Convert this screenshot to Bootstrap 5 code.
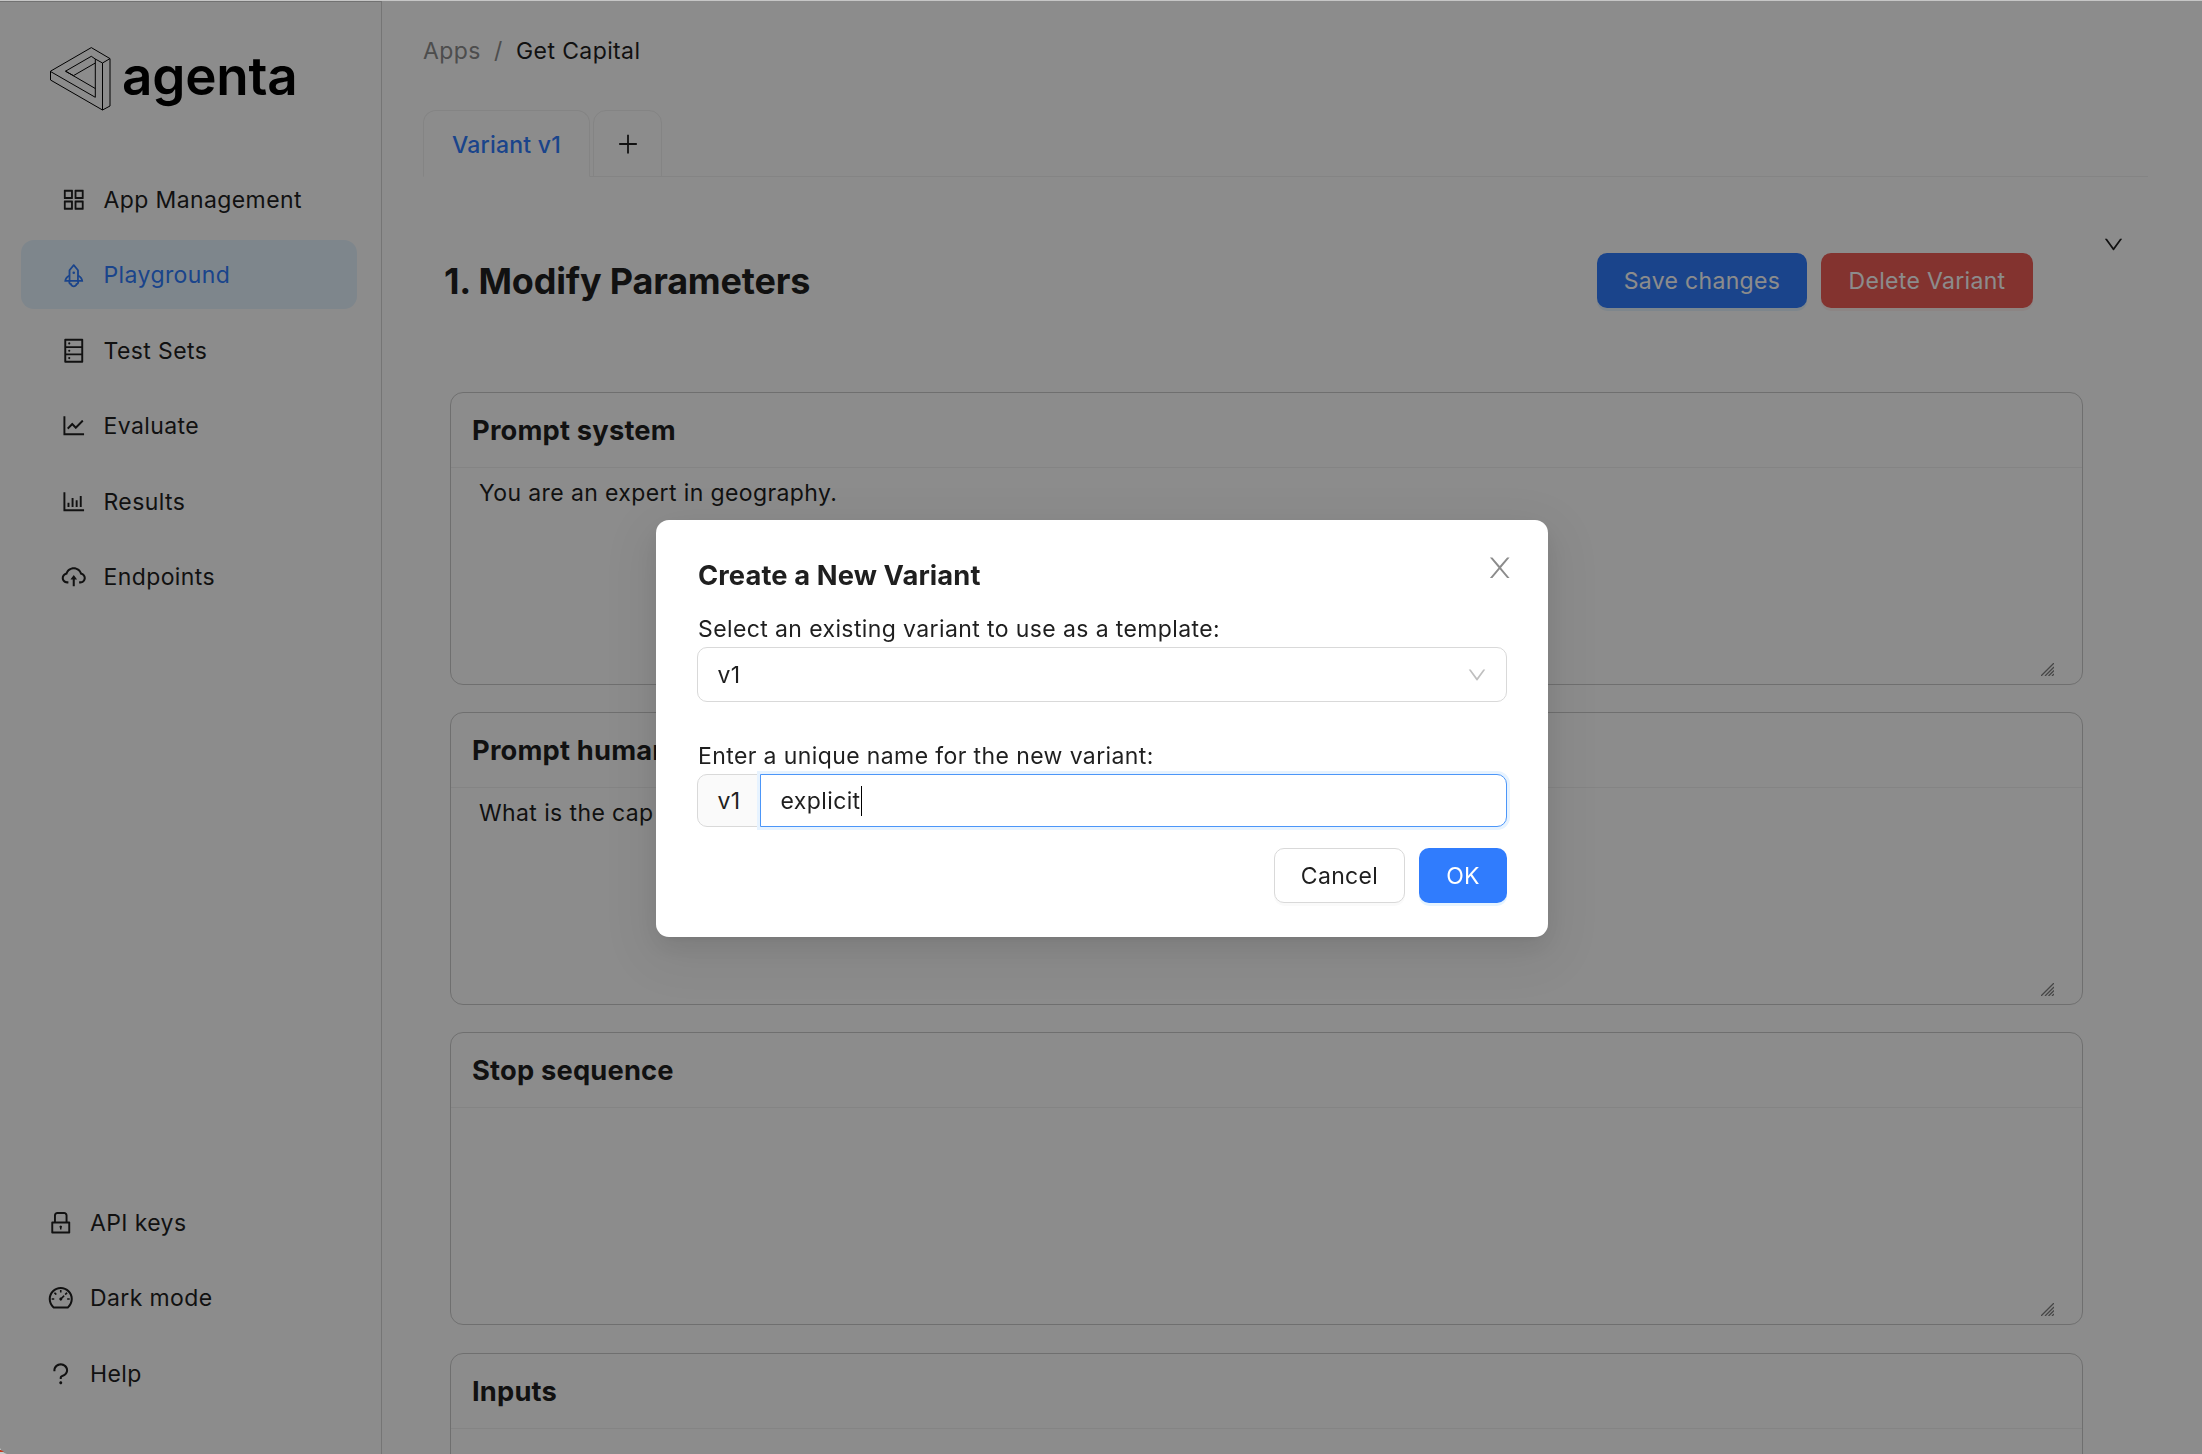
<!DOCTYPE html>
<html lang="en">
<head>
<meta charset="utf-8">
<title>Agenta - Playground</title>
<meta name="viewport" content="width=device-width, initial-scale=1">
<link href="https://cdn.jsdelivr.net/npm/bootstrap@5.3.0/dist/css/bootstrap.min.css" rel="stylesheet">
<style>
:root { --ink: #1f1f1f; --brand: #307cfd; --line: #f0f0f0; --field: #d9d9d9; }
html, body { height: 100%; overflow: hidden; }
body { font-family: Inter, "Liberation Sans", sans-serif; font-size: 23px; font-weight: 425; line-height: 36px; letter-spacing: .017em; color: var(--ink); background: #fff; }
.ico { width: 27.5px; height: 27.5px; fill: currentColor; flex: none; display: block; }
.app-shell { height: 1454px; overflow: hidden; padding-top: 1px; }

.side-col { width: 382px; border-top: 1px solid #d0d0d0; border-right: 1px solid #d6d6d6; padding: 44px 24px 46px 21px; }
.brand-row { padding-left: 27px; height: 66px; }
.brand-mark { width: 64px; height: 66px; fill: none; stroke: #000; stroke-width: 1; stroke-linejoin: round; }
.brand-name { font-weight: 560; font-size: 53px; line-height: 60px; height: 66px; letter-spacing: -.004em; color: #000; margin-left: 10px; }
.side-nav { gap: 6.4px; }
.side-nav .nav-link { height: 69px; padding: 1px 39px 0; gap: 16px; border-radius: 13px; color: var(--ink); display: flex; align-items: center; white-space: nowrap; }
.side-nav.top-nav { margin-top: 53px; }
.side-nav .nav-link.active { background: #e6f4ff; color: var(--brand); }
.side-nav.low-nav .nav-link { padding: 0 25.5px; }

.main-col { padding: 32px 54px 0 41px; }
.crumbs { height: 36px; margin-bottom: 41px; --bs-breadcrumb-divider-color: #8c8c8c; --bs-breadcrumb-item-padding-x: 13.3px; }
.crumbs .breadcrumb-item { color: #8c8c8c; }
.crumbs .breadcrumb-item.active { color: var(--ink); }
.tab-strip { border-bottom: 1px solid var(--line); height: 67px; gap: 3px; flex-wrap: nowrap; }
.tab-strip .nav-link { height: 67px; border: 1px solid var(--line); border-radius: 13px 13px 0 0; padding: 2px 0 0; display: flex; align-items: center; justify-content: center; color: var(--ink); margin: 0; }
.tab-strip .nav-link.active { width: 167px; border-color: var(--line); border-bottom-color: #fff; color: var(--brand); font-weight: 500; letter-spacing: .01em; }
.tab-strip .tab-add { width: 69px; padding: 0; }
.tab-add .ico { width: 24px; height: 24px; }

.param-head { padding: 76px 23px 0 21px; height: 215px; align-items: flex-start; }
.param-head h2 { font-size: 36px; line-height: 56px; font-weight: 700; letter-spacing: -.005em; margin: 0; }
.btn { height: 55px; border-radius: 10px; font-size: 23px; font-weight: 425; line-height: 1; padding: 1px 0 0; letter-spacing: .014em; white-space: nowrap; }
.btn-brand, .btn-brand:hover { background: var(--brand); color: #fff; border: 0; box-shadow: 0 3px 0 rgba(5,145,255,.1); }
.btn-drop { background: #ee5d57; color: #fff; border: 0; box-shadow: 0 3px 0 rgba(255,38,5,.06); }
.btn-plain { background: #fff; color: var(--ink); border: 1px solid var(--field); box-shadow: 0 3px 0 rgba(0,0,0,.02); }
.head-actions { gap: 14px; margin-right: 69px; }
.w-save { width: 210px; } .w-drop { width: 212px; } .w-cancel { width: 131px; } .w-ok { width: 88px; }
.fold { width: 23px; height: 23px; margin-top: -20px; }

.param-list { padding: 0 65px 0 27px; gap: 27.2px; }
.param-card { height: 293px; flex: none; border: 1px solid #cbcbcb; border-radius: 13px; --bs-card-bg: #fff; color: var(--ink); }
.param-card .card-header { height: 75px; background: none; border-bottom: 1px solid var(--line); padding: 2px 21px 0; font-size: 27.3px; font-weight: 650; display: flex; align-items: center; letter-spacing: .007em; }
.param-card .card-body { padding: 7px 28px 8px 28px; display: flex; justify-content: space-between; }
.grip { width: 13px; height: 13px; align-self: flex-end; stroke: #808080; stroke-width: 1.3; fill: none; }

.shade { position: fixed; inset: 0; background: rgba(0,0,0,.45); z-index: 1040; }
.top-edge { position: fixed; top: 0; left: 0; right: 0; height: 1px; background: #c6c6c6; z-index: 1045; }
.low-corner { position: fixed; left: 0; bottom: 0; width: 7px; height: 6px; z-index: 1045; }
.variant-modal .modal-dialog { max-width: 892px; margin: 520px 0 0 656px; }
.variant-modal .modal-content { height: 417px; border: 0; border-radius: 13px; padding: 35px 41px 34px; color: var(--ink); box-shadow: 0 10px 28px rgba(0,0,0,.08), 0 5px 10px -7px rgba(0,0,0,.12), 0 15px 48px 14px rgba(0,0,0,.05); }
.variant-modal .modal-title { font-size: 27.3px; line-height: 42px; font-weight: 650; letter-spacing: .004em; margin-left: 1px; }
.dismiss { position: absolute; top: 34px; right: 35px; color: #8c8c8c; }
.field-label { height: 36px; margin: 14px 0 0 1px; white-space: nowrap; }
.pick + .field-label { margin-top: 36px; }
.pick { height: 55px; border: 1px solid var(--field); border-radius: 10px; padding: 0 18px 0 19.5px; }
.pick .ico { width: 22px; height: 22px; color: #bfbfbf; }
.name-group { height: 53px; }
.name-group .input-group-text { width: 64px; padding: 1px 0 0 19.5px; background: #fafafa; border: 1px solid var(--field); border-radius: 10px 0 0 10px; font-size: 23px; font-weight: 425; letter-spacing: .017em; color: var(--ink); }
.name-box { border: 1px solid #4c96f8; border-radius: 0 10px 10px 0; padding: 0 20px 0 19.5px; box-shadow: 0 0 0 3px #e7f3ff; background: #fff; margin-left: -1px; display: flex; align-items: center; color: var(--ink); z-index: 2; }
.caret { width: 1px; height: 30px; background: #000; }
.modal-actions { gap: 14px; margin-top: 21px; }
</style>
<script src="https://cdn.jsdelivr.net/npm/bootstrap@5.3.0/dist/js/bootstrap.bundle.min.js"></script>
</head>
<body>
<svg class="d-none">
  <symbol id="i-apps" viewBox="0 0 1024 1024"><path d="M464 144H160c-8.800 0-16 7.200-16 16v304c0 8.800 7.200 16 16 16h304c8.800 0 16-7.200 16-16V160c0-8.800-7.200-16-16-16zm-52 268H212V212h200v200zm452-268H560c-8.800 0-16 7.200-16 16v304c0 8.800 7.200 16 16 16h304c8.800 0 16-7.200 16-16V160c0-8.800-7.200-16-16-16zm-52 268H612V212h200v200zM464 544H160c-8.800 0-16 7.200-16 16v304c0 8.800 7.200 16 16 16h304c8.800 0 16-7.200 16-16V560c0-8.800-7.200-16-16-16zm-52 268H212V612h200v200zm452-268H560c-8.800 0-16 7.200-16 16v304c0 8.800 7.200 16 16 16h304c8.800 0 16-7.200 16-16V560c0-8.800-7.200-16-16-16zm-52 268H612V612h200v200z"/></symbol>
  <symbol id="i-rocket" viewBox="0 0 1024 1024"><path d="M864 736c0-111.600-65.400-208-160-252.900V317.300c0-15.100-5.300-29.700-15.100-41.200L536.500 95.400C530.100 87.800 521 84 512 84s-18.100 3.800-24.500 11.400L335.100 276.100a63.970 63.970 0 00-15.100 41.200v165.800C225.400 528 160 624.400 160 736h156.500c-2.300 7.200-3.500 15-3.500 23.800 0 22.100 7.600 43.700 21.400 60.800a97.200 97.200 0 0043.100 30.600c23.100 54 75.600 88.800 134.500 88.800 29.100 0 57.300-8.600 81.400-24.800 23.600-15.800 41.900-37.900 53-64a97 97 0 0043.100-30.500 97.520 97.520 0 0021.400-60.800c0-8.400-1.100-16.400-3.100-23.800H864zM762.300 621.400c9.400 14.600 17 30.300 22.500 46.600H700V558.700a211.600 211.600 0 0162.300 62.700zM388 483.100V318.800l124-147 124 147V668H388V483.100zM239.200 668c5.500-16.300 13.100-32 22.500-46.600 16.300-25.200 37.500-46.500 62.300-62.700V668h-84.800zm388.900 116.200c-5.200 3-11.200 4.200-17.100 3.400l-19.500-2.400-2.800 19.400c-5.400 37.900-38.400 66.500-76.700 66.500-38.300 0-71.300-28.600-76.700-66.500l-2.800-19.500-19.500 2.500a27.700 27.700 0 01-17.100-3.500c-8.700-5-14.100-14.300-14.100-24.400 0-10.600 5.900-19.400 14.600-23.800h231.300c8.800 4.500 14.600 13.300 14.600 23.800-.1 10.200-5.500 19.600-14.200 24.500zM464 400a48 48 0 1096 0 48 48 0 10-96 0z"/></symbol>
  <symbol id="i-sets" viewBox="0 0 1024 1024"><path d="M832 64H192c-17.700 0-32 14.300-32 32v832c0 17.700 14.300 32 32 32h640c17.700 0 32-14.300 32-32V96c0-17.700-14.300-32-32-32zm-600 72h560v208H232V136zm560 480H232V408h560v208zm0 272H232V680h560v208zM304 240a40 40 0 1080 0 40 40 0 10-80 0zm0 272a40 40 0 1080 0 40 40 0 10-80 0zm0 272a40 40 0 1080 0 40 40 0 10-80 0z"/></symbol>
  <symbol id="i-line" viewBox="0 0 1024 1024"><path d="M888 792H200V168c0-4.400-3.600-8-8-8h-56c-4.400 0-8 3.600-8 8v688c0 4.400 3.600 8 8 8h752c4.400 0 8-3.600 8-8v-56c0-4.400-3.600-8-8-8zM305.800 637.700c3.100 3.100 8.100 3.100 11.300 0l138.300-137.600L583 628.500c3.100 3.100 8.200 3.100 11.300 0l275.400-275.300c3.100-3.100 3.100-8.200 0-11.300l-39.600-39.600c-3.100-3.100-8.200-3.100-11.300 0l-230 229.900L461.400 404c-3.100-3.100-8.200-3.100-11.300 0L266.300 586.700c-3.100 3.100-3.100 8.200 0 11.300l39.500 39.700z"/></symbol>
  <symbol id="i-bars" viewBox="0 0 1024 1024"><path d="M888 792H200V168c0-4.400-3.600-8-8-8h-56c-4.400 0-8 3.600-8 8v688c0 4.400 3.600 8 8 8h752c4.400 0 8-3.600 8-8v-56c0-4.400-3.600-8-8-8zm-600-80h56c4.400 0 8-3.600 8-8V560c0-4.400-3.600-8-8-8h-56c-4.400 0-8 3.600-8 8v144c0 4.400 3.600 8 8 8zm152 0h56c4.400 0 8-3.600 8-8V384c0-4.400-3.600-8-8-8h-56c-4.400 0-8 3.600-8 8v320c0 4.400 3.600 8 8 8zm152 0h56c4.400 0 8-3.600 8-8V462c0-4.400-3.600-8-8-8h-56c-4.400 0-8 3.600-8 8v242c0 4.400 3.600 8 8 8zm152 0h56c4.400 0 8-3.600 8-8V304c0-4.400-3.600-8-8-8h-56c-4.400 0-8 3.600-8 8v400c0 4.400 3.600 8 8 8z"/></symbol>
  <symbol id="i-cloud" viewBox="0 0 1024 1024"><path d="M518.300 459a8 8 0 00-12.600 0l-112 141.700a7.980 7.980 0 006.300 12.900h73.900V856c0 4.400 3.600 8 8 8h60c4.400 0 8-3.600 8-8V613.700H624c6.700 0 10.400-7.700 6.300-12.900L518.300 459z"/><path d="M811.400 366.700C765.600 245.900 648.900 160 512.200 160S258.800 245.800 213 366.600C127.300 389.100 64 467.200 64 560c0 110.500 89.500 200 199.900 200H304c4.400 0 8-3.600 8-8v-60c0-4.400-3.600-8-8-8h-40.100c-33.700 0-65.400-13.400-89-37.700-23.500-24.200-36-56.800-34.900-90.600.9-26.400 9.900-51.200 26.200-72.100 16.700-21.300 40.100-36.800 66.100-43.700l37.900-9.900 13.900-36.600c8.600-22.800 20.600-44.100 35.700-63.400a245.600 245.600 0 0152.400-49.900c41.100-28.900 89.500-44.200 140-44.200s98.900 15.300 140 44.200c19.900 14 37.500 30.800 52.400 49.900 15.100 19.300 27.100 40.700 35.700 63.400l13.800 36.500 37.800 10C846.100 454.500 884 503.800 884 560c0 33.100-12.900 64.300-36.300 87.700a123.070 123.070 0 01-87.600 36.300H720c-4.400 0-8 3.600-8 8v60c0 4.400 3.600 8 8 8h40.100C870.500 760 960 670.500 960 560c0-92.700-63.100-170.700-148.600-193.300z"/></symbol>
  <symbol id="i-lock" viewBox="0 0 1024 1024"><path d="M832 464h-68V240c0-70.700-57.300-128-128-128H388c-70.700 0-128 57.300-128 128v224h-68c-17.700 0-32 14.300-32 32v384c0 17.700 14.300 32 32 32h640c17.700 0 32-14.300 32-32V496c0-17.700-14.300-32-32-32zM332 240c0-30.900 25.100-56 56-56h248c30.900 0 56 25.100 56 56v224H332V240zm460 600H232V536h560v304zM484 701v53c0 4.400 3.600 8 8 8h40c4.400 0 8-3.600 8-8v-53a48.010 48.010 0 10-56 0z"/></symbol>
  <symbol id="i-dash" viewBox="0 0 1024 1024"><path d="M924.800 385.600a446.700 446.700 0 00-96-142.400 446.700 446.700 0 00-142.400-96C631.100 123.800 572.500 112 512 112s-119.100 11.800-174.400 35.200a446.700 446.700 0 00-142.400 96 446.700 446.700 0 00-96 142.400C75.800 440.900 64 499.500 64 560c0 132.700 58.300 257.700 159.900 343.100l1.700 1.400c5.800 4.800 13.100 7.500 20.600 7.500h531.700c7.500 0 14.800-2.700 20.600-7.500l1.700-1.400C901.700 817.700 960 692.700 960 560c0-60.500-11.900-119.100-35.200-174.400zM761.400 836H262.600A371.120 371.120 0 01140 560c0-99.400 38.700-192.800 109-263 70.300-70.300 163.700-109 263-109 99.400 0 192.800 38.700 263 109 70.300 70.300 109 163.700 109 263 0 105.600-44.500 205.500-122.600 276zM623.500 421.500a8.030 8.030 0 00-11.300 0L527.700 506c-18.700-5-39.400-.2-54.100 14.500a55.950 55.950 0 000 79.200 55.950 55.950 0 0079.200 0 55.870 55.870 0 0014.500-54.100l84.500-84.500c3.100-3.100 3.100-8.200 0-11.300l-28.300-28.300zM490 320h44c4.400 0 8-3.600 8-8v-80c0-4.400-3.600-8-8-8h-44c-4.400 0-8 3.600-8 8v80c0 4.400 3.600 8 8 8zm260 218v44c0 4.400 3.600 8 8 8h80c4.400 0 8-3.600 8-8v-44c0-4.400-3.600-8-8-8h-80c-4.400 0-8 3.600-8 8zm12.700-197.200l-31.100-31.100a8.030 8.030 0 00-11.300 0l-56.600 56.600a8.030 8.030 0 000 11.300l31.100 31.100c3.100 3.100 8.200 3.100 11.300 0l56.600-56.600c3.100-3.100 3.100-8.200 0-11.300zm-458.600-31.100a8.030 8.030 0 00-11.300 0l-31.100 31.100a8.030 8.030 0 000 11.300l56.600 56.600c3.100 3.100 8.200 3.100 11.300 0l31.100-31.100c3.100-3.100 3.100-8.200 0-11.300l-56.600-56.600zM262 530h-80c-4.400 0-8 3.600-8 8v44c0 4.400 3.600 8 8 8h80c4.400 0 8-3.600 8-8v-44c0-4.400-3.600-8-8-8z"/></symbol>
  <symbol id="i-help" viewBox="0 0 1024 1024"><path d="M764 280.900c-14-30.600-33.900-58.100-59.300-81.600C653.100 151.400 584.600 125 512 125s-141.100 26.400-192.700 74.200c-25.400 23.600-45.300 51-59.300 81.700-14.600 32-22 65.900-22 100.900v27c0 6.200 5 11.200 11.200 11.200h54c6.200 0 11.200-5 11.200-11.200v-27c0-99.500 88.600-180.400 197.600-180.400s197.600 80.900 197.600 180.400c0 40.800-14.500 79.200-42 111.200-27.200 31.700-65.600 54.400-108.100 64-24.300 5.500-46.200 19.200-61.700 38.800a110.850 110.850 0 00-23.900 68.600v31.400c0 6.200 5 11.200 11.200 11.200h54c6.200 0 11.200-5 11.200-11.200v-31.400c0-15.700 10.900-29.500 26-32.900 58.400-13.200 111.400-44.700 149.300-88.700 19.100-22.300 34-47.100 44.300-74 10.700-27.900 16.100-57.200 16.100-87 0-35-7.400-69-22-100.900zM512 787c-30.900 0-56 25.100-56 56s25.100 56 56 56 56-25.100 56-56-25.100-56-56-56z"/></symbol>
  <symbol id="i-down" viewBox="0 0 1024 1024"><path d="M884 256h-75c-5.100 0-9.900 2.500-12.900 6.600L512 654.200 227.900 262.600c-3-4.100-7.800-6.600-12.900-6.600h-75c-6.500 0-10.300 7.400-6.500 12.700l352.600 486.100c12.800 17.600 39 17.600 51.700 0l352.600-486.100c3.900-5.300.1-12.700-6.400-12.700z"/></symbol>
  <symbol id="i-plus" viewBox="0 0 1024 1024"><path d="M474 112h76v800h-76zM136 474h752v76H136z"/></symbol>
  <symbol id="i-close" viewBox="0 0 1024 1024"><path d="M146 128h92L512 450 786 128h92L559 508 878 896h-92L512 568 238 896h-92L465 508z"/></symbol>
</svg>

<div class="app-shell d-flex">
  <aside class="side-col d-flex flex-column flex-shrink-0">
    <div class="brand-row d-flex align-items-center">
      <svg class="brand-mark" viewBox="48 46 64 66"><path d="M50.500 71.200 91.300 47.600 110 58.600V106L102.500 110 50.500 80zM110 58.600 102.500 63V110M102.500 63 91.300 56.300 65.500 71.200 95.300 88.500M50.500 71.500 95.300 97.300V59M73.500 75.600 95.300 63" class="d-none"/><path d="M50.500 71.200 91.300 47.600 110 58.600V106L102.500 110 50.500 80zM110 58.600 102.500 63V110M102.500 63 95.300 59 91.300 56.300 65.500 71.200 95.300 88.500M65.500 71.200M50.500 71.200M65.500 71.200 73.500 75.600 95.300 63M50.500 71.500 95.300 97.300V59"/></svg>
      <span class="brand-name">agenta</span>
    </div>
    <nav class="side-nav top-nav nav flex-column">
      <a class="nav-link"><svg class="ico"><use href="#i-apps"/></svg>App Management</a>
      <a class="nav-link active"><svg class="ico"><use href="#i-rocket"/></svg>Playground</a>
      <a class="nav-link"><svg class="ico"><use href="#i-sets"/></svg>Test Sets</a>
      <a class="nav-link"><svg class="ico"><use href="#i-line"/></svg>Evaluate</a>
      <a class="nav-link"><svg class="ico"><use href="#i-bars"/></svg>Results</a>
      <a class="nav-link"><svg class="ico"><use href="#i-cloud"/></svg>Endpoints</a>
    </nav>
    <nav class="side-nav low-nav nav flex-column mt-auto">
      <a class="nav-link"><svg class="ico"><use href="#i-lock"/></svg>API keys</a>
      <a class="nav-link"><svg class="ico"><use href="#i-dash"/></svg>Dark mode</a>
      <a class="nav-link"><svg class="ico"><use href="#i-help"/></svg>Help</a>
    </nav>
  </aside>

  <main class="main-col flex-grow-1 d-flex flex-column">
    <ol class="crumbs breadcrumb flex-shrink-0">
      <li class="breadcrumb-item">Apps</li>
      <li class="breadcrumb-item active">Get Capital</li>
    </ol>
    <ul class="tab-strip nav nav-tabs flex-shrink-0">
      <li class="nav-item"><a class="nav-link active">Variant v1</a></li>
      <li class="nav-item"><a class="nav-link tab-add"><svg class="ico"><use href="#i-plus"/></svg></a></li>
    </ul>
    <div class="param-head d-flex flex-shrink-0">
      <h2 class="me-auto">1. Modify Parameters</h2>
      <div class="head-actions d-flex">
        <button class="btn btn-brand w-save">Save changes</button>
        <button class="btn btn-drop w-drop">Delete Variant</button>
      </div>
      <svg class="ico fold"><use href="#i-down"/></svg>
    </div>
    <section class="param-list d-flex flex-column">
      <div class="card param-card"><div class="card-header">Prompt system</div>
        <div class="card-body"><span>You are an expert in geography.</span><svg class="grip" viewBox="0 0 13 13"><path d="M0 13 13 0M4 13 13 4M7.500 13 13 7.500M11 13 13 11"/></svg></div></div>
      <div class="card param-card"><div class="card-header">Prompt human</div>
        <div class="card-body"><span>What is the cap</span><svg class="grip" viewBox="0 0 13 13"><path d="M0 13 13 0M4 13 13 4M7.500 13 13 7.500M11 13 13 11"/></svg></div></div>
      <div class="card param-card"><div class="card-header">Stop sequence</div>
        <div class="card-body"><span></span><svg class="grip" viewBox="0 0 13 13"><path d="M0 13 13 0M4 13 13 4M7.500 13 13 7.500M11 13 13 11"/></svg></div></div>
      <div class="card param-card"><div class="card-header">Inputs</div><div class="card-body"></div></div>
    </section>
  </main>
</div>

<div class="shade"></div>
<div class="top-edge"></div>
<svg class="low-corner" viewBox="0 0 7 6"><path d="M0 0Q1.500 4 7 6H0z" fill="#c9c9c9"/><path d="M0 2H1L4 4H0z" fill="#c23a22"/></svg>

<div class="modal variant-modal d-block" tabindex="-1">
  <div class="modal-dialog">
    <div class="modal-content">
      <svg class="ico dismiss"><use href="#i-close"/></svg>
      <h5 class="modal-title">Create a New Variant</h5>
      <div class="field-label">Select an existing variant to use as a template:</div>
      <div class="pick d-flex align-items-center justify-content-between"><span>v1</span><svg class="ico"><use href="#i-down"/></svg></div>
      <div class="field-label">Enter a unique name for the new variant:</div>
      <div class="name-group input-group flex-nowrap">
        <span class="input-group-text">v1</span>
        <div class="name-box flex-grow-1"><span>explicit</span><span class="caret"></span></div>
      </div>
      <div class="modal-actions d-flex justify-content-end">
        <button class="btn btn-plain w-cancel">Cancel</button>
        <button class="btn btn-brand w-ok">OK</button>
      </div>
    </div>
  </div>
</div>
</body>
</html>
